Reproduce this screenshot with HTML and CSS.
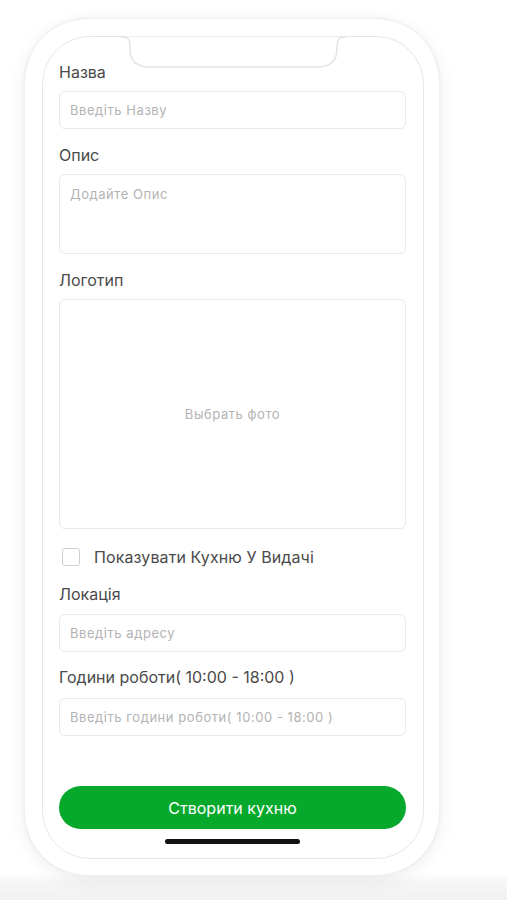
FILE: index.html
```html
<!DOCTYPE html>
<html lang="uk">
<head>
<meta charset="utf-8">
<title>Створити кухню</title>
<link rel="stylesheet" href="styles.css">
</head>
<body>
<div class="page">
  <div class="phone">
    <div class="screen">
      <svg class="notch" width="225" height="34" viewBox="0 0 225 34" aria-hidden="true">
        <path d="M0 0.75 C7 0.75 9 3 9 11 L9 13 C9 25 16 31 29 31 L196 31 C209 31 216 25 216 13 L216 11 C216 3 218 0.75 225 0.75 Z" fill="#fff" stroke="none"/>
        <path d="M0 0.75 C7 0.75 9 3 9 11 L9 13 C9 25 16 31 29 31 L196 31 C209 31 216 25 216 13 L216 11 C216 3 218 0.75 225 0.75" fill="none" stroke="#e3e3e3" stroke-width="1.5"/>
      </svg>
      <div class="form">
        <div class="label l-name">Назва</div>
        <div class="field"><span class="ph">Введіть Назву</span></div>
        <div class="label">Опис</div>
        <div class="field area"><span class="ph">Додайте Опис</span></div>
        <div class="label">Логотип</div>
        <div class="field logo"><span class="ph">Выбрать фото</span></div>
        <div class="check-row">
          <span class="checkbox"></span>
          <span class="check-text">Показувати Кухню У Видачі</span>
        </div>
        <div class="label l-loc">Локація</div>
        <div class="field f-loc"><span class="ph">Введіть адресу</span></div>
        <div class="label l-hours">Години роботи( 10:00 - 18:00 )</div>
        <div class="field f-hours"><span class="ph">Введіть години роботи( 10:00 - 18:00 )</span></div>
        <div class="button">Створити кухню</div>
        <div class="home"></div>
      </div>
    </div>
  </div>
</div>
</body>
</html>
```

FILE: styles.css
```css
* { box-sizing: border-box; }
html, body { margin: 0; padding: 0; background: #fff; }
body {
  font-family: Inter, "Noto Sans", "Liberation Sans", sans-serif;
  width: 507px;
  height: 900px;
  overflow: hidden;
}
.page {
  position: relative;
  width: 507px;
  height: 900px;
  padding: 18px 0 0 24px;
  background: linear-gradient(#fff 0, #fff 874px, #f6f6f6 882px, #f1f1f1 900px);
}
.phone {
  position: relative;
  z-index: 1;
  width: 416px;
  height: 858px;
  border-radius: 64px;
  background: #fff;
  border: 1px solid #f0f0f0;
  box-shadow: 0 4px 18px rgba(0, 0, 0, 0.07), 0 0 3px rgba(0, 0, 0, 0.05);
  padding: 17px 0 0 17px;
}
.screen {
  position: relative;
  width: 382px;
  height: 823px;
  border: 1.5px solid #e6e6e6;
  border-radius: 48px;
  padding: 0 17px 0 16px;
}
.notch {
  position: absolute;
  top: -1.5px;
  left: 78px;
  display: block;
}
.form {
  display: flex;
  flex-direction: column;
  padding-top: 25px;
}
.label {
  font-size: 16px;
  line-height: 20px;
  color: #4a4a4a;
  margin-top: 16px;
  margin-bottom: 9px;
}
.l-name { margin-top: 0; }
.l-loc { margin-top: 17px; margin-bottom: 10px; }
.l-hours { margin-top: 15px; margin-bottom: 11px; }
.field {
  height: 38px;
  border: 1px solid #e8e8e8;
  border-radius: 6px;
  padding: 0 10px;
  display: flex;
  align-items: center;
}
.ph {
  font-size: 13px;
  color: #b3b3b3;
  line-height: 16px;
  letter-spacing: 0.55px;
}
.area {
  height: 80px;
  align-items: flex-start;
  padding-top: 11px;
}
.logo {
  height: 230px;
  justify-content: center;
}
.check-row {
  display: flex;
  align-items: center;
  height: 20px;
  margin-top: 18px;
  padding-left: 3px;
}
.checkbox {
  width: 18px;
  height: 18px;
  border: 1.5px solid #cfcfcf;
  border-radius: 3px;
  background: #fff;
}
.check-text {
  margin-left: 14px;
  font-size: 16px;
  color: #4a4a4a;
  letter-spacing: 0.1px;
}
.button {
  margin-top: 50px;
  height: 43px;
  border-radius: 22px;
  background: #07a92c;
  color: #fff;
  font-size: 16px;
  display: flex;
  align-items: center;
  justify-content: center;
}
.home {
  align-self: center;
  margin-top: 10px;
  width: 135px;
  height: 5px;
  border-radius: 3px;
  background: #111;
}
```
